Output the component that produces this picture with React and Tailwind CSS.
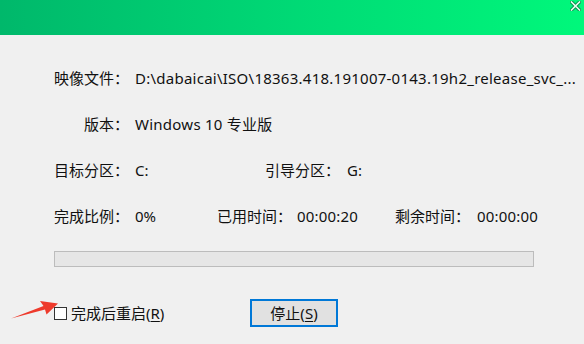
import React from "react";

const font = { fontFamily: '"Noto Sans", "Noto Sans CJK SC", sans-serif' };

function Label({ children, w = "w-[75px]" }) {
  return <span className={`${w} shrink-0 text-right`}>{children}</span>;
}

export default function App() {
  return (
    <div
      className="relative w-[584px] h-[344px] overflow-hidden bg-[#f0f0f0] text-[15px] leading-none text-[#111111]"
      style={font}
    >
      {/* title bar */}
      <div className="relative h-[35px] bg-gradient-to-r from-[#00b86b] via-[#00d975] to-[#00f87b]">
        <svg
          className="absolute right-[3px] top-[1px]"
          width="11"
          height="10"
          viewBox="0 0 11 10"
        >
          <path
            d="M1.5 1 L9.5 9 M9.5 1 L1.5 9"
            stroke="#0a8a4c"
            strokeWidth="3.4"
            strokeLinecap="square"
          />
          <path
            d="M1.5 1 L9.5 9 M9.5 1 L1.5 9"
            stroke="#e8fff2"
            strokeWidth="1.6"
            strokeLinecap="square"
          />
        </svg>
      </div>

      <div className="pl-[54px] pt-[20px]">
        {/* image file */}
        <div className="h-[46px] flex items-center whitespace-nowrap">
          <Label>映像文件：</Label>
          <span className="ml-[6px] tracking-[0.25px]">
            D:\dabaicai\ISO\18363.418.191007-0143.19h2_release_svc_...
          </span>
        </div>

        {/* version */}
        <div className="h-[46px] flex items-center whitespace-nowrap">
          <Label>版本：</Label>
          <span className="ml-[6px] tracking-[0.25px]">Windows 10 专业版</span>
        </div>

        {/* partitions */}
        <div className="h-[46px] flex items-center whitespace-nowrap">
          <Label>目标分区：</Label>
          <span className="ml-[6px] w-[130px]">C:</span>
          <Label>引导分区：</Label>
          <span className="ml-[7px]">G:</span>
        </div>

        {/* progress info */}
        <div className="h-[46px] flex items-center whitespace-nowrap">
          <Label>完成比例：</Label>
          <span className="ml-[6px] w-[82px]">0%</span>
          <Label>已用时间：</Label>
          <span className="ml-[5px] w-[98px] tracking-[0.2px]">00:00:20</span>
          <Label>剩余时间：</Label>
          <span className="ml-[7px] tracking-[0.2px]">00:00:00</span>
        </div>

        {/* progress bar */}
        <div className="mt-[12px] w-[480px] h-[16px] border border-[#bcbcbc] bg-[#e6e6e6]" />

        {/* bottom controls */}
        <div className="mt-[32px] h-[28px] flex items-center">
          <label className="flex items-center whitespace-nowrap w-[196px]">
            <span className="w-[13px] h-[13px] border border-[#333333] bg-white shrink-0" />
            <span className="ml-[4px]">
              完成后重启(<span className="underline underline-offset-2">R</span>)
            </span>
          </label>
          <button className="w-[88px] h-[28px] border-2 border-[#0078d7] bg-[#e1e1e1] flex items-center justify-center">
            停止(<span className="underline underline-offset-2">S</span>)
          </button>
        </div>
      </div>

      {/* red annotation arrow */}
      <svg
        className="absolute left-0 top-[296px]"
        width="64"
        height="26"
        viewBox="0 296 64 26"
      >
        <polygon
          points="11,318.5 43.5,306 40,301 58,303.5 46.5,314.5 45,309.5"
          fill="#ee3a2c"
        />
      </svg>
    </div>
  );
}
